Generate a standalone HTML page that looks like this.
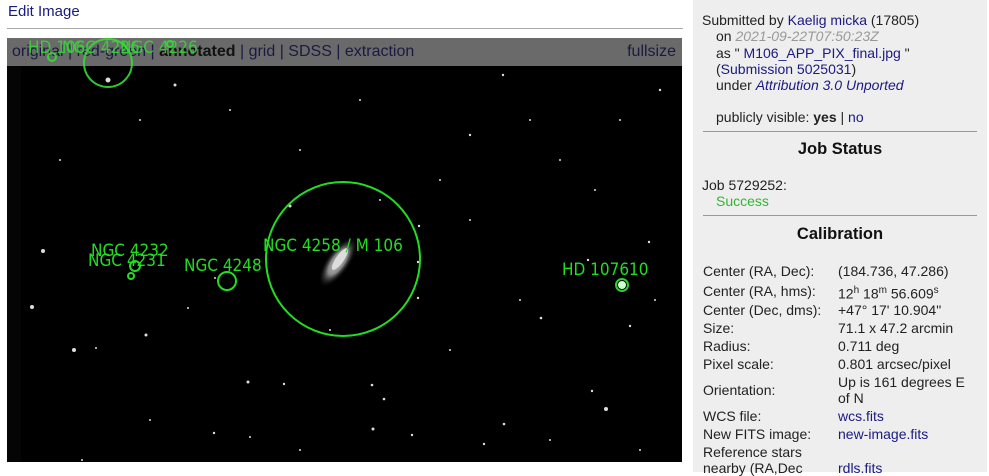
<!DOCTYPE html>
<html><head><meta charset="utf-8"><style>
body{margin:0;width:989px;height:472px;overflow:hidden;background:#fff;font-family:"Liberation Sans",Arial,sans-serif;font-size:14px;color:#222;position:relative}
a{color:#1a1a80;text-decoration:none}
#edit{position:absolute;left:8px;top:3px;font-size:15px;color:#1a1a80}
#hr1{position:absolute;left:7px;top:28px;width:676px;height:1px;background:#aaa}
#img{position:absolute;left:7px;top:38px;width:675px;height:424px;background:#000;overflow:hidden}
#bar{position:absolute;left:7px;top:38px;width:675px;height:28px;background:rgba(118,118,118,.9);font-size:16px;line-height:28px}
#bar span.l{position:absolute;left:5px;color:#1a1a40}
#bar span.r{position:absolute;right:6px;color:#1a1a40}
#top{position:absolute;left:7px;top:38px}
#side{position:absolute;left:693px;top:0;width:294px;height:472px;background:#eeeeee}
.t{position:absolute;white-space:nowrap;line-height:16px}
.rule{position:absolute;left:10px;width:274px;height:1px;background:#999}
h3{position:absolute;margin:0;width:294px;text-align:center;font-size:16.5px;font-weight:bold;color:#111}
</style></head><body>
<div id="edit">Edit Image</div>
<div id="hr1"></div>
<div id="img">
<svg width="675" height="424" viewBox="7 38 675 424" xmlns="http://www.w3.org/2000/svg">
<defs><radialGradient id="g"><stop offset="0" stop-color="#fff"/><stop offset=".5" stop-color="#aaa"/><stop offset="1" stop-color="#000" stop-opacity="0"/></radialGradient></defs>
<rect x="7" y="38" width="675" height="424" fill="#000"/>
<rect x="7" y="38" width="14" height="424" fill="#050505"/>
<g fill="#ddd">
<circle cx="108" cy="80" r="2.5"/><circle cx="175" cy="85" r="1.5"/><circle cx="43" cy="251" r="2"/><circle cx="32" cy="307" r="2"/><circle cx="74" cy="350" r="2"/><circle cx="146" cy="335" r="1.5"/><circle cx="290" cy="206" r="1.5"/><circle cx="418" cy="298" r="1.2"/><circle cx="419" cy="226" r="1.2"/><circle cx="248" cy="382" r="1.5"/><circle cx="284" cy="384" r="1.2"/><circle cx="372" cy="385" r="1.3"/><circle cx="384" cy="399" r="1.3"/><circle cx="484" cy="444" r="1.2"/><circle cx="504" cy="424" r="1.3"/><circle cx="541" cy="318" r="1.3"/><circle cx="606" cy="409" r="2"/><circle cx="592" cy="391" r="1.2"/><circle cx="418" cy="262" r="1.2"/><circle cx="373" cy="429" r="1.5"/><circle cx="412" cy="435" r="1.2"/><circle cx="470" cy="135" r="1.2"/><circle cx="503" cy="75" r="1.2"/><circle cx="649" cy="242" r="1.2"/><circle cx="630" cy="326" r="1.2"/><circle cx="588" cy="260" r="1.2"/><circle cx="214" cy="433" r="1.2"/><circle cx="250" cy="437" r="1"/><circle cx="82" cy="460" r="1"/><circle cx="96" cy="348" r="1"/><circle cx="188" cy="308" r="1"/><circle cx="215" cy="278" r="1"/><circle cx="300" cy="150" r="1"/><circle cx="380" cy="200" r="1"/><circle cx="560" cy="160" r="1"/><circle cx="620" cy="120" r="1"/><circle cx="660" cy="90" r="1.2"/><circle cx="140" cy="120" r="1"/><circle cx="60" cy="160" r="1"/><circle cx="230" cy="110" r="1"/><circle cx="330" cy="330" r="1"/><circle cx="450" cy="350" r="1"/><circle cx="520" cy="300" r="1"/><circle cx="470" cy="220" r="1"/><circle cx="360" cy="100" r="1"/><circle cx="440" cy="180" r="1"/><circle cx="530" cy="120" r="1"/><circle cx="595" cy="190" r="1"/><circle cx="655" cy="300" r="1"/><circle cx="150" cy="420" r="1"/><circle cx="300" cy="450" r="1"/><circle cx="550" cy="440" r="1"/><circle cx="640" cy="450" r="1"/>
</g>
<ellipse cx="338" cy="262" rx="12" ry="30" transform="rotate(35 338 262)" fill="url(#g)" opacity=".8"/>
<ellipse cx="340" cy="259" rx="4" ry="13" transform="rotate(35 340 259)" fill="#ddd"/>
<circle cx="622" cy="285" r="4" fill="#cfc"/><circle cx="622" cy="285" r="6" fill="none" stroke="#3c3" stroke-width="2"/>
<g fill="none" stroke="#22dd22" stroke-width="2">
<circle cx="343" cy="259" r="77"/>
<ellipse cx="227" cy="281" rx="9" ry="9"/>
<circle cx="135" cy="266" r="5"/><circle cx="131" cy="276" r="3"/>
</g>
<g fill="#22dd22" font-family="DejaVu Sans Condensed,DejaVu Sans,sans-serif" font-size="17">
<text x="263" y="251">NGC 4258 / M 106</text>
<text x="184" y="271">NGC 4248</text>
<text x="91" y="256">NGC 4232</text>
<text x="88" y="266">NGC 4231</text>
<text x="562" y="275">HD 107610</text>
</g>
</svg>
</div>
<div id="bar"><span class="l">original | red-green | <b style="color:#111">annotated</b> | grid | SDSS | extraction</span><span class="r">fullsize</span></div>
<svg id="top" width="220" height="60" viewBox="7 38 220 60" xmlns="http://www.w3.org/2000/svg">
<g fill="none" stroke="#33dd33" stroke-width="2" opacity=".9">
<circle cx="108" cy="63" r="24"/><circle cx="52" cy="57" r="4"/><circle cx="170" cy="44" r="3"/>
</g>
<g fill="#33dd33" font-family="DejaVu Sans Condensed,DejaVu Sans,sans-serif" font-size="17" opacity=".85">
<text x="28" y="53">HD 106</text><text x="62" y="53">NGC 4226</text><text x="120" y="53">NGC 4226</text>
</g>
</svg>
<div id="side">
<div class="t" style="left:9px;top:12px">Submitted by <a>Kaelig micka</a> (17805)</div>
<div class="t" style="left:23px;top:28px">on <i style="color:#999">2021-09-22T07:50:23Z</i></div>
<div class="t" style="left:23px;top:45px">as " <a>M106_APP_PIX_final.jpg</a> "</div>
<div class="t" style="left:23px;top:61px">(<a>Submission 5025031</a>)</div>
<div class="t" style="left:23px;top:77px">under <a><i>Attribution 3.0 Unported</i></a></div>
<div class="t" style="left:23px;top:109px">publicly visible: <b>yes</b> | <a>no</a></div>
<div class="rule" style="top:131px"></div>
<h3 style="top:140px">Job Status</h3>
<div class="t" style="left:9px;top:177px">Job 5729252:</div>
<div class="t" style="left:23px;top:193px;color:#2fb82f">Success</div>
<div class="rule" style="top:215px"></div>
<h3 style="top:225px">Calibration</h3>
<div class="t" style="left:10px;top:263px">Center (RA, Dec):</div><div class="t" style="left:145px;top:263px">(184.736, 47.286)</div>
<div class="t" style="left:10px;top:283px">Center (RA, hms):</div><div class="t" style="left:145px;top:283px">12<sup style="font-size:10px">h</sup> 18<sup style="font-size:10px">m</sup> 56.609<sup style="font-size:10px">s</sup></div>
<div class="t" style="left:10px;top:302px">Center (Dec, dms):</div><div class="t" style="left:145px;top:302px">+47° 17' 10.904"</div>
<div class="t" style="left:10px;top:320px">Size:</div><div class="t" style="left:145px;top:320px">71.1 x 47.2 arcmin</div>
<div class="t" style="left:10px;top:338px">Radius:</div><div class="t" style="left:145px;top:338px">0.711 deg</div>
<div class="t" style="left:10px;top:356px">Pixel scale:</div><div class="t" style="left:145px;top:356px">0.801 arcsec/pixel</div>
<div class="t" style="left:10px;top:382px">Orientation:</div><div class="t" style="left:145px;top:374px">Up is 161 degrees E<br>of N</div>
<div class="t" style="left:10px;top:408px">WCS file:</div><div class="t" style="left:145px;top:408px"><a>wcs.fits</a></div>
<div class="t" style="left:10px;top:426px">New FITS image:</div><div class="t" style="left:145px;top:426px"><a>new-image.fits</a></div>
<div class="t" style="left:10px;top:444px">Reference stars<br>nearby (RA,Dec</div><div class="t" style="left:145px;top:460px"><a>rdls.fits</a></div>
</div>
</body></html>
